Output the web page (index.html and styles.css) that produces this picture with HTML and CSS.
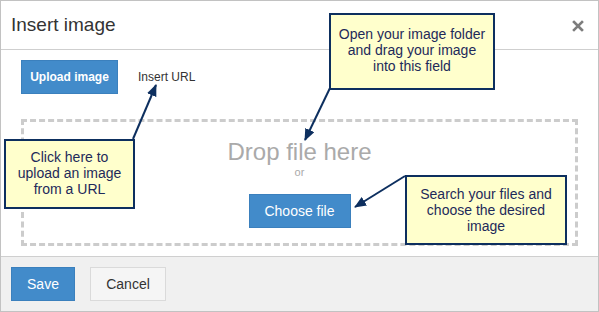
FILE: index.html
```html
<!DOCTYPE html>
<html lang="en">
<head>
  <meta charset="UTF-8" />
  <title>Insert image</title>
  <link rel="stylesheet" href="styles.css">
</head>
<body>
  <div class="dialog">
    <div class="dialog-header">
      <h1 class="dialog-title">Insert image</h1>
      <span class="close-btn" title="Close">
        <svg width="12" height="12" viewBox="0 0 12 12"><path d="M2 2L10 10M10 2L2 10" stroke="#7d7d7d" stroke-width="2.6" stroke-linecap="square"/></svg>
      </span>
    </div>

    <div class="dialog-body">
      <div class="tabs">
        <button class="btn btn-primary btn-tab">Upload image</button>
        <span class="tab-link">Insert URL</span>
      </div>
      <div class="dropzone">
        <div class="drop-title">Drop file here</div>
        <div class="drop-or">or</div>
        <button class="btn btn-primary btn-choose">Choose file</button>
      </div>
    </div>

    <div class="dialog-footer">
      <button class="btn btn-primary btn-save">Save</button>
      <button class="btn btn-default">Cancel</button>
    </div>

    <!-- help overlay -->
    <svg class="arrows" width="599" height="312" viewBox="0 0 599 312">
      <defs>
        <marker id="head" markerUnits="userSpaceOnUse" markerWidth="12" markerHeight="10" refX="11" refY="5" orient="auto">
          <path d="M0 0L12 5L0 10Z" fill="#0d2f5f"/>
        </marker>
      </defs>
      <line x1="330" y1="88" x2="305" y2="140" stroke="#0d2f5f" stroke-width="2" marker-end="url(#head)"/>
      <line x1="133" y1="139" x2="156" y2="85" stroke="#0d2f5f" stroke-width="2" marker-end="url(#head)"/>
      <line x1="405" y1="176" x2="355" y2="207" stroke="#0d2f5f" stroke-width="2" marker-end="url(#head)"/>
    </svg>
    <div class="callout callout-drag">Open your image folder<br>and drag your image<br>into this field</div>
    <div class="callout callout-url">Click here to<br>upload an image<br>from a URL</div>
    <div class="callout callout-files">Search your files and<br>choose the desired<br>image</div>
  </div>
</body>
</html>
```

FILE: styles.css
```css
html, body {
  margin: 0;
  padding: 0;
  background: #fff;
  font-family: "Liberation Sans", Arial, sans-serif;
  color: #333;
}
.dialog {
  position: relative;
  width: 599px;
  height: 312px;
  box-sizing: border-box;
  border: 1px solid #c2c2c2;
  display: flex;
  flex-direction: column;
  overflow: hidden;
}
.dialog-header {
  height: 48px;
  border-bottom: 1px solid #cfcfcf;
  display: flex;
  align-items: center;
  justify-content: space-between;
  padding: 0 14px 0 10px;
}
.dialog-title {
  margin: 0;
  font-size: 19px;
  font-weight: normal;
  color: #333;
}
.close-btn {
  display: flex;
  margin-top: 2px;
}
.dialog-body {
  padding: 10px 20px 10px 20px;
}
.tabs {
  display: flex;
  align-items: center;
  gap: 20px;
  height: 34px;
}
.btn {
  font-family: inherit;
  border: 1px solid transparent;
  box-sizing: border-box;
  height: 34px;
  cursor: pointer;
  padding: 0;
}
.btn-primary {
  background: #428bca;
  border-color: #3b80bd;
  color: #fff;
}
.btn-tab {
  width: 97px;
  font-size: 12px;
  font-weight: bold;
}
.tab-link {
  font-size: 12px;
  color: #333;
}
.dropzone {
  margin-top: 25px;
  height: 127px;
  box-sizing: border-box;
  border: 3px dashed #cccccc;
  display: flex;
  flex-direction: column;
  align-items: center;
  padding-top: 16px;
}
.drop-title {
  font-size: 24px;
  line-height: 28px;
  color: #aaa;
}
.drop-or {
  font-size: 11px;
  line-height: 13px;
  color: #aaa;
}
.btn-choose {
  margin-top: 15px;
  width: 102px;
  font-size: 14px;
}
.dialog-footer {
  flex: 1;
  border-top: 1px solid #cfcfcf;
  background: #f0f0f0;
  display: flex;
  align-items: flex-start;
  gap: 15px;
  padding: 10px;
}
.btn-save {
  width: 64px;
  font-size: 14px;
}
.btn-default {
  width: 76px;
  font-size: 14px;
  background: #f5f5f5;
  border-color: #dadada;
  color: #333;
}
.arrows {
  position: absolute;
  left: -1px;
  top: -1px;
}
.callout {
  position: absolute;
  box-sizing: border-box;
  border: 2px solid #0d2f5f;
  background: #ffffcc;
  color: #1e2a5a;
  font-size: 14px;
  line-height: 16px;
  text-align: center;
  white-space: nowrap;
  display: flex;
  align-items: center;
  justify-content: center;
}
.callout-drag {
  left: 328px;
  top: 12px;
  width: 166px;
  height: 77px;
  padding-bottom: 4px;
}
.callout-url {
  left: 3px;
  top: 138px;
  width: 131px;
  height: 70px;
  padding-bottom: 2px;
}
.callout-files {
  left: 404px;
  top: 174px;
  width: 162px;
  height: 70px;
}
```
